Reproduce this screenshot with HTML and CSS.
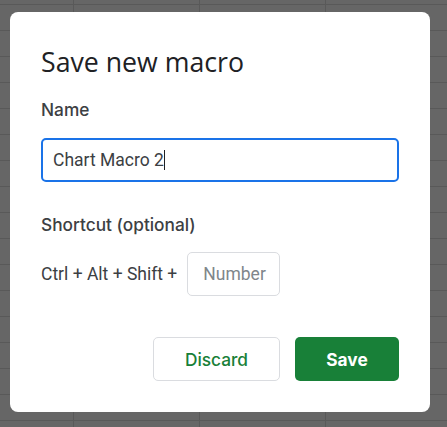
FILE: index.html
```html
<!DOCTYPE html>
<html lang="en">
<head>
  <meta charset="UTF-8" />
  <meta name="viewport" content="width=device-width, initial-scale=1.0" />
  <title>Save new macro</title>
  <link rel="stylesheet" href="styles.css">
</head>
<body>

  <div class="dialog" role="dialog" aria-labelledby="dialog-title">
    <h2 class="dialog-title" id="dialog-title">Save new macro</h2>

    <label class="field-label" for="macro-name">Name</label>
    <div class="text-field focused" id="macro-name">
      <span class="value">Chart Macro 2</span><span class="caret"></span>
    </div>

    <div class="field-label shortcut-label">Shortcut (optional)</div>
    <div class="shortcut-row">
      <span class="keys">Ctrl + Alt + Shift +</span>
      <input class="number-field" type="text" placeholder="Number">
    </div>

    <div class="actions">
      <button class="btn btn-outline">Discard</button>
      <button class="btn btn-primary">Save</button>
    </div>
  </div>

</body>
</html>
```

FILE: styles.css
```css
html, body {
  height: 100%;
}
body {
  margin: 0;
  padding: 12px 17px 0 10px;
  box-sizing: border-box;
  font-family: Roboto, "Liberation Sans", sans-serif;
  color: #3c4043;
  background-color: #666666;
  background-image:
    linear-gradient(#595959 1px, transparent 1px),
    linear-gradient(90deg, #595959 1px, transparent 1px);
  background-size: 126px 26px;
  background-position: 73px 4px;
}

.dialog {
  width: 420px;
  box-sizing: border-box;
  background: #fff;
  border-radius: 8px;
  padding: 32px 31px 31px 31px;
  display: flex;
  flex-direction: column;
}

.dialog-title {
  margin: 0;
  font-family: "Open Sans", sans-serif;
  font-weight: 400;
  font-size: 26.7px;
  line-height: 36px;
  color: #202124;
}

.field-label {
  margin-top: 18px;
  font-family: Inter, "Open Sans", sans-serif;
  font-size: 17.3px;
  font-weight: 500;
  line-height: 24px;
  color: #3c4043;
}
.shortcut-label {
  margin-top: 31px;
}

.text-field {
  margin-top: 16px;
  height: 44px;
  box-sizing: border-box;
  border: 1px solid #dadce0;
  border-radius: 5px;
  padding: 0 10px;
  display: flex;
  align-items: center;
  font-size: 17.5px;
  color: #3c4043;
}
.text-field.focused {
  border: 2px solid #1a73e8;
}
.caret {
  display: inline-block;
  width: 1px;
  height: 20px;
  background: #202124;
}

.shortcut-row {
  margin-top: 15px;
  display: flex;
  align-items: center;
  gap: 10px;
}
.keys {
  font-size: 17.5px;
  line-height: 24px;
}
.number-field {
  width: 93px;
  height: 44px;
  box-sizing: border-box;
  border: 1px solid #dadce0;
  border-radius: 5px;
  padding: 0 0 0 15px;
  font-family: Roboto, sans-serif;
  font-size: 17.5px;
  color: #3c4043;
  outline: none;
}
.number-field::placeholder {
  color: #80868b;
}

.actions {
  margin-top: 41px;
  display: flex;
  justify-content: flex-end;
  gap: 15px;
}
.btn {
  height: 44px;
  border-radius: 5px;
  font-family: Inter, "Open Sans", sans-serif;
  font-size: 17.3px;
  font-weight: 500;
  cursor: pointer;
}
.btn-outline {
  width: 127px;
  background: #fff;
  border: 1px solid #dadce0;
  color: #188038;
}
.btn-primary {
  width: 104px;
  background: #188038;
  border: none;
  color: #fff;
  font-weight: 700;
}
```
